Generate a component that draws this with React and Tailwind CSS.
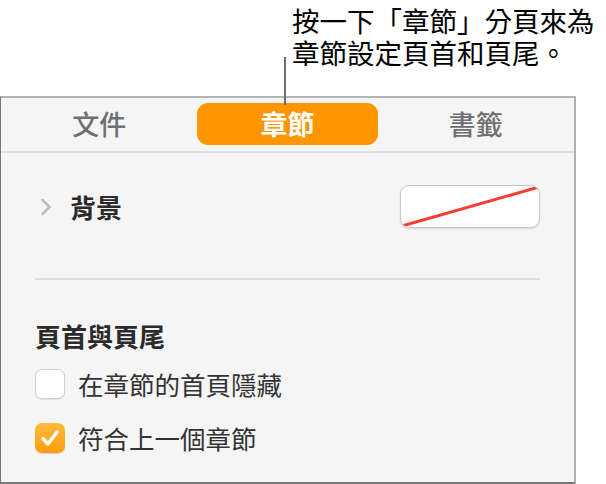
import React from "react";

const FONT = { fontFamily: '"Noto Sans CJK TC", "Noto Sans", sans-serif' };

function Chevron() {
  return (
    <svg width="12" height="18" viewBox="0 0 12 18" className="shrink-0">
      <path d="M2.5 2 L9.5 9 L2.5 16" fill="none" stroke="#bdbdbd" strokeWidth="2.6" strokeLinecap="round" strokeLinejoin="round" />
    </svg>
  );
}

function Checkbox({ checked }) {
  if (checked) {
    return (
      <span className="flex h-[30px] w-[30px] shrink-0 items-center justify-center rounded-[7px] bg-gradient-to-b from-[#ffbb3a] to-[#ff9d00] shadow-[0_1px_1px_rgba(0,0,0,0.15)]">
        <svg width="20" height="18" viewBox="0 0 20 18">
          <path d="M3 9.5 L8 15 L17 3" fill="none" stroke="#fff" strokeWidth="3.4" strokeLinecap="round" strokeLinejoin="round" />
        </svg>
      </span>
    );
  }
  return (
    <span className="h-[30px] w-[30px] shrink-0 rounded-[7px] border border-[#cfcfcf] bg-white shadow-[0_1px_1px_rgba(0,0,0,0.08)]" />
  );
}

export default function App() {
  return (
    <div className="relative h-[484px] w-[606px] overflow-hidden bg-white" style={FONT}>
      {/* Callout */}
      <div className="h-[96px] pl-[292px] pt-[4px]">
        <p className="whitespace-nowrap text-[27.5px] leading-[32px] text-black">
          按一下「章節」分頁來為
          <br />
          章節設定頁首和頁尾。
        </p>
      </div>
      <div className="absolute left-[284px] top-[57px] h-[48px] w-[2px] bg-[#6e6e6e]" />

      {/* Panel */}
      <div className="h-[388px] w-[576px] border-b-2 border-l border-r-2 border-t-2 border-b-[#7a7a7a] border-l-[#777] border-r-[#b0b0b0] border-t-[#b4b4b4] bg-[#f5f5f5]">
        <div className="grid h-[55px] grid-cols-3 border-b-2 border-[#e0e0e0] px-[4px] pt-[5px]">
          <div className="flex h-[42px] items-center justify-center text-[27px] font-medium text-[#6f6f6f]">文件</div>
          <div className="mx-[4px] flex h-[42px] items-center justify-center rounded-[11px] bg-[#ff9500] text-[27px] font-bold text-white">章節</div>
          <div className="flex h-[42px] items-center justify-center text-[27px] font-medium text-[#6f6f6f]">書籤</div>
        </div>

        <div className="px-[34px] pt-[32px]">
          <div className="flex items-center justify-between">
            <div className="flex items-center gap-[18px] pl-[5px]">
              <Chevron />
              <span className="text-[26px] font-bold leading-[30px] text-[#2b2b2b]">背景</span>
            </div>
            <div className="h-[43px] w-[140px] overflow-hidden rounded-[9px] border border-[#c8c8c8] bg-white shadow-[0_1px_2px_rgba(0,0,0,0.12)]">
              <svg width="138" height="41" viewBox="0 0 138 41">
                <line x1="1" y1="40" x2="138" y2="1" stroke="#ff3b30" strokeWidth="3" />
              </svg>
            </div>
          </div>

          <div className="mt-[50px] h-[2px] bg-[#dcdcdc]" />

          <h2 className="mt-[41px] text-[26px] font-bold leading-[30px] text-[#2b2b2b]">頁首與頁尾</h2>

          <label className="mt-[18px] flex items-center gap-[13px]">
            <Checkbox checked={false} />
            <span className="text-[25.5px] leading-[30px] text-[#333]">在章節的首頁隱藏</span>
          </label>
          <label className="mt-[24px] flex items-center gap-[13px]">
            <Checkbox checked />
            <span className="text-[25.5px] leading-[30px] text-[#333]">符合上一個章節</span>
          </label>
        </div>
      </div>
    </div>
  );
}
